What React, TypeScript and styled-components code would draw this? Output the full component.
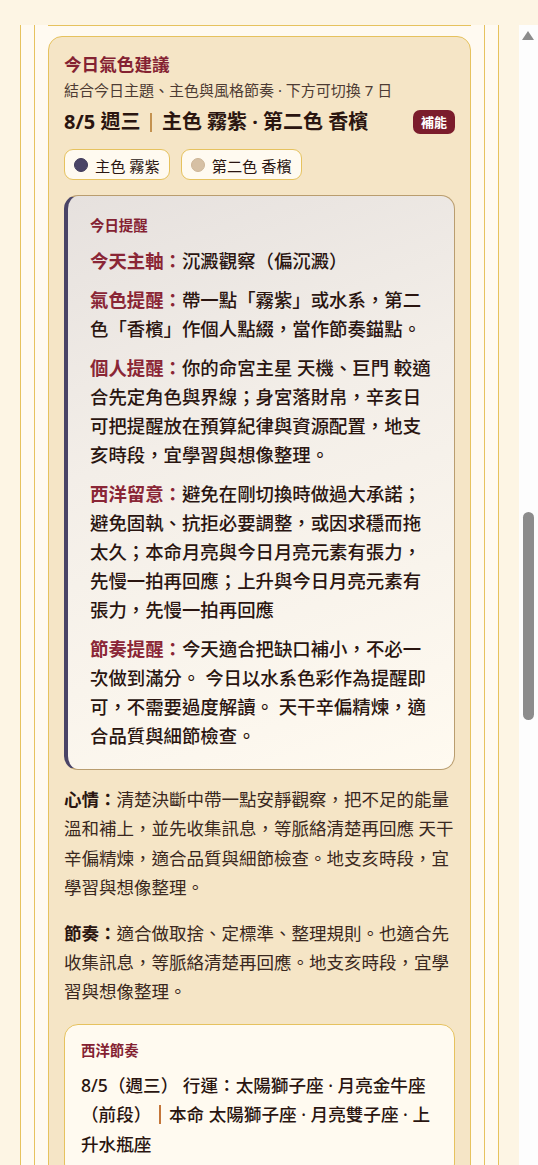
import React from "react";
import styled, { createGlobalStyle } from "styled-components";

const GlobalStyle = createGlobalStyle`
  * { box-sizing: border-box; }
  html, body, #root { height: 100%; }
  html, body {
    margin: 0;
    padding: 0;
    overflow: hidden;
    background: #fdf5e4;
  }
  body {
    font-family: "Noto Sans", "Noto Sans CJK TC", sans-serif;
    color: #2a1510;
  }
`;

const Page = styled.div`
  height: 100%;
  padding-top: 25px;
  display: flex;
`;

const Viewport = styled.div`
  flex: 1;
  min-width: 0;
  overflow: hidden;
`;

// the page is scrolled about halfway down; the rail shows where
const Rail = styled.div`
  width: 19px;
  flex: none;
  display: flex;
  flex-direction: column;
  background: #fdfdfd;
`;

const RailArrow = styled.div`
  width: 0;
  height: 0;
  margin: 6px 0 0 3px;
  border-left: 6.5px solid transparent;
  border-right: 6.5px solid transparent;
  border-bottom: 9px solid #8c8c8c;
`;

const RailThumb = styled.div<{ $top: number; $size: number }>`
  width: 11px;
  height: ${(p) => p.$size}px;
  margin: ${(p) => p.$top}px 0 0 4px;
  border-radius: 6px;
  background: #8c8c8c;
`;

const OuterPanel = styled.div`
  min-height: 100%;
  margin: 0 20px;
  padding: 0 13px;
  background: #fffaf1;
  border-left: 1px solid #e6c25e;
  border-right: 1px solid #e6c25e;
`;

const InnerPanel = styled.div`
  min-height: 1140px;
  padding: 0 13px;
  border-left: 1px solid #e6c25e;
  border-right: 1px solid #e6c25e;
`;

const SectionRule = styled.hr`
  margin: 0;
  border: 0;
  border-top: 1px solid #e6c25e;
`;

const Card = styled.section`
  margin-top: 10px;
  padding: 15px 15px 18px;
  background: #f5e5c6;
  border: 1px solid #e6c25e;
  border-radius: 14px;
`;

const CardTitle = styled.h3`
  margin: 0;
  font-size: 17.6px;
  line-height: 25px;
  font-weight: 700;
  color: #842232;
`;

const CardSub = styled.div`
  margin-top: 2px;
  font-size: 15px;
  line-height: 23px;
  color: #4d3b33;
`;

const Headline = styled.div`
  margin-top: 6px;
  display: flex;
  align-items: center;
  justify-content: space-between;
`;

const DayTitle = styled.h2`
  margin: 0;
  display: flex;
  align-items: center;
  font-size: 20px;
  line-height: 28px;
  font-weight: 700;
  color: #2a1510;
  white-space: pre;
`;

const Bar = styled.span<{ $color: string; $gap: number; $h: number }>`
  display: inline-block;
  width: 1.5px;
  height: ${(p) => p.$h}px;
  margin: 0 ${(p) => p.$gap}px;
  background: ${(p) => p.$color};
  vertical-align: -3px;
`;

const Badge = styled.span`
  padding: 2px 8px;
  border-radius: 7px;
  background: #7b1c2c;
  color: #fff;
  font-size: 13px;
  line-height: 20px;
  font-weight: 700;
`;

const ChipRow = styled.div`
  margin-top: 13px;
  display: flex;
  gap: 11px;
`;

const Chip = styled.span`
  display: inline-flex;
  align-items: center;
  gap: 7px;
  height: 31px;
  padding: 0 9px;
  border: 1px solid #e6c25e;
  border-radius: 9px;
  background: #fffaf0;
  font-size: 15.2px;
  color: #2a1510;
`;

const Dot = styled.span<{ $color: string; $ring: string }>`
  width: 14px;
  height: 14px;
  border-radius: 50%;
  background: ${(p) => p.$color};
  border: 1px solid ${(p) => p.$ring};
`;

const Reminder = styled.div`
  margin-top: 15px;
  padding: 20px 20px 19px 22px;
  border: 1px solid #b99d6f;
  border-left: 4px solid #4a4466;
  border-radius: 14px;
  background: linear-gradient(160deg, #e6e1de 0%, #f3eee8 40%, #fffaf0 100%);
`;

const BoxLabel = styled.div`
  font-size: 14.4px;
  line-height: 20px;
  font-weight: 700;
  color: #842232;
`;

const Tip = styled.p`
  margin: 10px 0 0;
  font-size: 18.4px;
  line-height: 29px;
  font-weight: 500;
  color: #2a1510;
`;

const TipKey = styled.strong`
  font-weight: 700;
  color: #8a2636;
`;

const Note = styled.p<{ $top: number }>`
  margin: ${(p) => p.$top}px 0 0;
  font-size: 17.5px;
  line-height: 29.4px;
  color: #3a2820;
`;

const NoteKey = styled.strong`
  font-weight: 700;
  color: #2a1510;
`;

const WestBox = styled.div`
  margin-top: 17px;
  padding: 16px 16px 18px;
  border: 1px solid #e6c25e;
  border-radius: 14px;
  background: #fffaf0;
`;

const WestLine = styled.p`
  margin: 10px 0 0;
  font-size: 17.6px;
  line-height: 29.5px;
  font-weight: 500;
  color: #2a1510;
`;

const tips = [
  { key: "今天主軸：", text: "沉澱觀察（偏沉澱）" },
  {
    key: "氣色提醒：",
    text: "帶一點「霧紫」或水系，第二色「香檳」作個人點綴，當作節奏錨點。",
  },
  {
    key: "個人提醒：",
    text: "你的命宮主星 天機、巨門 較適合先定角色與界線；身宮落財帛，辛亥日可把提醒放在預算紀律與資源配置，地支亥時段，宜學習與想像整理。",
  },
  {
    key: "西洋留意：",
    text: "避免在剛切換時做過大承諾；避免固執、抗拒必要調整，或因求穩而拖太久；本命月亮與今日月亮元素有張力，先慢一拍再回應；上升與今日月亮元素有張力，先慢一拍再回應",
  },
  {
    key: "節奏提醒：",
    text: "今天適合把缺口補小，不必一次做到滿分。 今日以水系色彩作為提醒即可，不需要過度解讀。 天干辛偏精煉，適合品質與細節檢查。",
  },
];

export default function App() {
  return (
    <Page>
      <GlobalStyle />
      <Viewport>
        <OuterPanel>
          <InnerPanel>
            <SectionRule />
            <Card>
              <CardTitle>今日氣色建議</CardTitle>
              <CardSub>結合今日主題、主色與風格節奏 · 下方可切換 7 日</CardSub>
              <Headline>
                <DayTitle>
                  8/5 週三
                  <Bar $color="#c49250" $gap={10} $h={19} />
                  主色 霧紫 · 第二色 香檳
                </DayTitle>
                <Badge>補能</Badge>
              </Headline>
              <ChipRow>
                <Chip>
                  <Dot $color="#4a4466" $ring="#3f3a5a" />
                  主色 霧紫
                </Chip>
                <Chip>
                  <Dot $color="#d6c0a4" $ring="#cdb596" />
                  第二色 香檳
                </Chip>
              </ChipRow>

              <Reminder>
                <BoxLabel>今日提醒</BoxLabel>
                {tips.map((t) => (
                  <Tip key={t.key}>
                    <TipKey>{t.key}</TipKey>
                    {t.text}
                  </Tip>
                ))}
              </Reminder>

              <Note $top={15}>
                <NoteKey>心情：</NoteKey>
                清楚決斷中帶一點安靜觀察，把不足的能量溫和補上，並先收集訊息，等脈絡清楚再回應
                天干辛偏精煉，適合品質與細節檢查。地支亥時段，宜學習與想像整理。
              </Note>
              <Note $top={16}>
                <NoteKey>節奏：</NoteKey>
                適合做取捨、定標準、整理規則。也適合先收集訊息，等脈絡清楚再回應。地支亥時段，宜學習與想像整理。
              </Note>

              <WestBox>
                <BoxLabel>西洋節奏</BoxLabel>
                <WestLine>
                  8/5（週三） 行運：太陽獅子座 · 月亮金牛座（前段）
                  <Bar $color="#c4763a" $gap={8} $h={19} />
                  本命 太陽獅子座 · 月亮雙子座 · 上升水瓶座
                </WestLine>
              </WestBox>
            </Card>
          </InnerPanel>
        </OuterPanel>
      </Viewport>
      <Rail>
        <RailArrow />
        <RailThumb $top={472} $size={208} />
      </Rail>
    </Page>
  );
}
